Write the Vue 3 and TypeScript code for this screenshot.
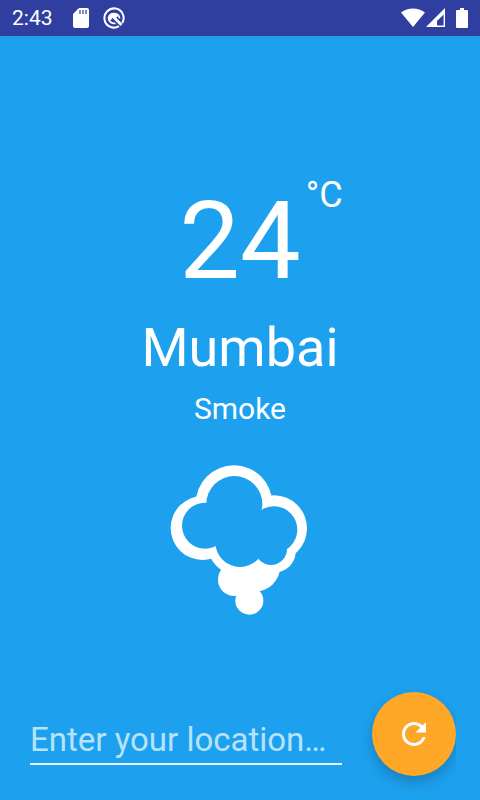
<script setup lang="ts">
import { ref } from 'vue'

interface Weather {
  temperature: number
  unit: string
  city: string
  condition: string
}

const time = '2:43'
const location = ref<string>('')
const weather = ref<Weather>({
  temperature: 24,
  unit: '°C',
  city: 'Mumbai',
  condition: 'Smoke',
})

function refresh(): void {
  const city = location.value.trim()
  if (city) weather.value = { ...weather.value, city }
}
</script>

<template>
  <div class="screen">
    <header class="status">
      <div class="group">
        <span class="time">{{ time }}</span>
        <svg class="sd" viewBox="0 0 16 20" aria-hidden="true">
          <path fill="#fff" d="M6 0h8a2 2 0 0 1 2 2v16a2 2 0 0 1-2 2H2a2 2 0 0 1-2-2V6z" />
          <path stroke="#303f9f" stroke-width="1.2" d="M7 2v4M10 2v4M13 2v4" />
        </svg>
        <svg class="badge" viewBox="0 0 22 22" fill="none" aria-hidden="true">
          <path stroke="#fff" stroke-width="2" d="M16 19.200A9.600 9.600 0 1 1 19.200 16" />
          <path stroke="#fff" stroke-width="1.800" d="M12.500 16.300A5.600 5.600 0 0 1 5.600 11A5.600 5.600 0 0 1 16.600 11.500" />
          <path stroke="#fff" stroke-width="2.600" d="M9 8.500l9.500 9.500" />
          <path fill="#fff" d="M5.500 10.500l3-4 4-.5 2.500 3-2 2-3-1-2 3-2 .500z" />
        </svg>
      </div>
      <div class="signals">
        <svg class="wifi" viewBox="0 0 24 20" aria-hidden="true">
          <path fill="#fff" d="M0 4.500C7 -1 17 -1 24 4.500L12 19z" />
        </svg>
        <svg class="cell" viewBox="0 0 20 20" aria-hidden="true">
          <path fill="#fff" fill-rule="evenodd" d="M19 0v19H0zM17.600 6.500l-6.600 6.500v4.500h6.600z" />
        </svg>
        <svg class="battery" viewBox="0 0 12 20" aria-hidden="true">
          <path fill="#fff" d="M4 0h4v2h3a1 1 0 0 1 1 1v16a1 1 0 0 1-1 1H1a1 1 0 0 1-1-1V3a1 1 0 0 1 1-1h3z" />
        </svg>
      </div>
    </header>

    <main class="weather">
      <div class="reading">
        <span class="degrees">{{ weather.temperature }}</span>
        <span class="unit">{{ weather.unit }}</span>
      </div>
      <h1 class="city">{{ weather.city }}</h1>
      <p class="condition">{{ weather.condition }}</p>
      <svg class="cloud" viewBox="0 0 480 510" role="img" :aria-label="weather.condition">
        <g fill="#fff">
          <circle cx="222" cy="146" r="115" />
          <circle cx="128" cy="219" r="96" />
          <circle cx="342" cy="220" r="99" />
          <circle cx="345" cy="290" r="62" />
          <circle cx="240" cy="262" r="100" />
          <circle cx="223" cy="374" r="49" />
          <circle cx="284" cy="333" r="77" />
          <circle cx="268" cy="437" r="42" />
        </g>
        <g fill="#1da1ef">
          <circle cx="223" cy="147" r="84" />
          <circle cx="135" cy="212" r="69" />
          <circle cx="342" cy="224" r="70" />
          <circle cx="333" cy="282" r="48" />
          <circle cx="240" cy="262" r="74" />
        </g>
      </svg>
    </main>

    <form class="search" @submit.prevent="refresh">
      <input v-model="location" class="field" type="text" placeholder="Enter your location…" aria-label="Location" />
      <button class="fab" type="submit" aria-label="Refresh">
        <svg class="refresh" viewBox="0 0 24 24" aria-hidden="true">
          <path fill="#fff" d="M17.65 6.35C16.2 4.9 14.21 4 12 4c-4.42 0-7.99 3.58-7.99 8s3.57 8 7.99 8c3.73 0 6.84-2.55 7.73-6h-2.08c-.82 2.33-3.04 4-5.65 4-3.31 0-6-2.69-6-6s2.69-6 6-6c1.66 0 3.14.69 4.22 1.78L13 11h7V4l-2.35 2.35z" />
        </svg>
      </button>
    </form>
  </div>
</template>

<style>
body {
  background: #1da1ef;
}
</style>

<style scoped>
.screen {
  display: flex;
  flex-direction: column;
  box-sizing: border-box;
  min-height: 100vh;
  background: #1da1ef;
  color: #fff;
  font-family: Roboto, "Liberation Sans", sans-serif;
}

svg {
  display: block;
}

.status {
  display: flex;
  align-items: center;
  justify-content: space-between;
  height: 36px;
  padding: 0 12px;
  background: #303f9f;
}

.group,
.signals {
  display: flex;
  align-items: center;
}

.time {
  margin-right: 20px;
  font-size: 21px;
  line-height: 24px;
}

.sd {
  width: 16px;
  height: 20px;
  margin-right: 14px;
}

.badge {
  width: 22px;
  height: 22px;
}

.wifi {
  width: 24px;
  height: 20px;
}

.cell {
  width: 20px;
  height: 20px;
  margin: 0 10px 0 1px;
}

.battery {
  width: 12px;
  height: 20px;
}

.weather {
  display: flex;
  flex: 1;
  flex-direction: column;
  align-items: center;
  padding-top: 141px;
}

.reading {
  display: grid;
  grid-template-columns: 1fr auto 1fr;
  width: 100%;
}

.degrees {
  grid-column: 2;
  font-size: 108px;
  line-height: 128px;
}

.unit {
  padding-left: 5px;
  font-size: 36px;
  line-height: 36px;
}

.city {
  margin: 11px 0 0;
  font-size: 54px;
  font-weight: 400;
  line-height: 64px;
}

.condition {
  margin: 11px 0 0;
  font-size: 30px;
  line-height: 36px;
}

.cloud {
  width: 160px;
  height: 170px;
  margin-top: 28px;
}

.search {
  display: flex;
  align-items: center;
  gap: 30px;
  padding: 0 24px 24px 30px;
}

.field {
  flex: 1;
  box-sizing: border-box;
  min-width: 0;
  height: 62px;
  padding: 12px 0 0;
  border: 0;
  border-bottom: 2px solid #e8f6fe;
  border-radius: 0;
  outline: 0;
  background: transparent;
  color: #fff;
  font-family: inherit;
  font-size: 33px;
}

.field::placeholder {
  color: #b8e1fb;
  opacity: 1;
}

.fab {
  display: flex;
  align-items: center;
  justify-content: center;
  width: 84px;
  height: 84px;
  padding: 0;
  border: 0;
  border-radius: 50%;
  background: #ffa726;
  box-shadow: 0 6px 14px rgb(0 0 0 / 22%);
  clip-path: inset(-30px 0 -30px -30px);
  cursor: pointer;
}

.refresh {
  width: 36px;
  height: 36px;
}
</style>
